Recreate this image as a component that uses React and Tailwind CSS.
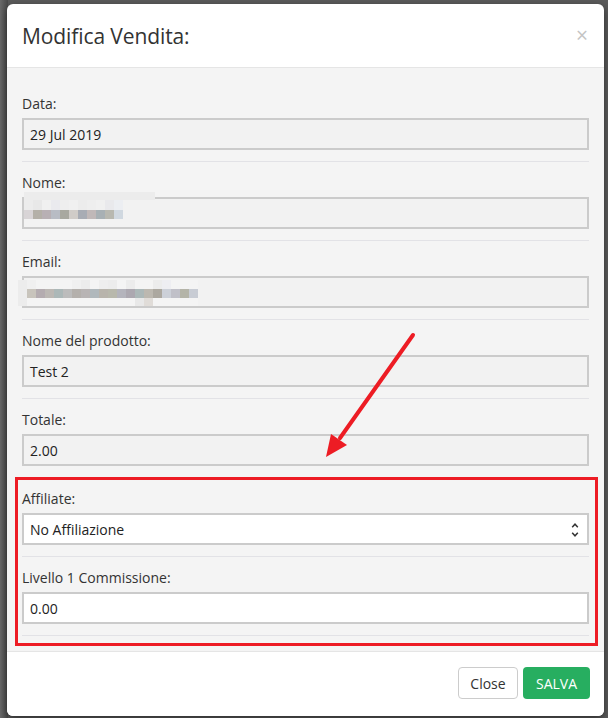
import React from "react";

const nomeCells = ["#d8d4d6","#b4b0a8","#b8b0b4","#b8bcc4","#a8a8a0","#d0ccc8","#a8acb4","#c0b8b8","#a8b0b4","#b8b8b0","#d0d8e0"];
const nomeMid = ["#ececec","#e8e8e8","#f0f0f0","#eaeaee","#eeeeee","#f0f0f0","#ececec","#eeeeee","#f0f0f0","#e9e9ec","#eceef2"];
const emailTop = ["#ececec","#f0f0f0","#f4f4f4","#f4f4f4","#f4f4f4","#f4f4f4","#f0f0f0","#ececec","#f4f4f4","#eeeeee","#ececec","#f4f4f4","#ececec","#f4f4f4","#f4f4f4","#ececec","#eeeef2","#f4f4f4","#f4f4f4","#f4f4f4"];
const emailCells = ["#ececec","#c8c4bc","#b4acb0","#bcb8b4","#acb8b8","#bcbcbc","#b4b0ac","#b8b4b4","#b0b8bc","#b8b4ac","#b8b8ac","#b4b4bc","#aca8b0","#acb8b8","#bcb8b0","#aca8a0","#ccd0d8","#c0c0c8","#b4b4a8","#c8ccd4"];
const emailBot = ["#ececec","#f4f4f4","#f4f4f4","#f4f4f4","#f4f4f4","#f4f4f4","#f4f4f4","#f4f4f4","#f4f4f4","#f4f4f4","#f4f4f4","#f4f4f4","#f4f4f4","#e8e8e8","#e0dcd8","#f4f4f4","#f4f4f4","#f4f4f4","#f4f4f4","#f4f4f4"];

function Group({ label, value, first, white, select, children }) {
  return (
    <div className={"relative pt-[10px] pb-[11px] " + (first ? "" : "border-t border-[#e2e2e6]")}>
      <div className="h-[20px] leading-[20px] text-[14px] text-[#333] mb-[5px] translate-y-[1px]">{label}</div>
      <div className={"relative h-[32px] border-2 border-[#cbcbcb] flex items-center px-[6px] text-[14px] text-[#222] " + (white ? "bg-white" : "bg-[#f2f2f2]")}>
        {value}
        {select && (
          <svg className="absolute right-[8px] top-[7px]" width="8" height="16" viewBox="0 0 8 16">
            <path d="M1.2 5.2 L4 2.2 L6.8 5.2" fill="none" stroke="#333" strokeWidth="1.5" />
            <path d="M1.2 10.8 L4 13.8 L6.8 10.8" fill="none" stroke="#333" strokeWidth="1.5" />
          </svg>
        )}
      </div>
      {children}
    </div>
  );
}

export default function App() {
  return (
    <div className="relative w-[608px] h-[718px] overflow-hidden bg-[#5b5b5b]" style={{ fontFamily: '"Open Sans", "Noto Sans", sans-serif' }}>
      <div className="absolute left-0 top-0 w-[8px] h-full bg-gradient-to-r from-[#6a6a6a] to-[#4a4a4a]" />
      <div className="relative ml-[7px] mt-[4px] w-[597px] h-[712px] bg-white rounded-[6px] shadow-[0_3px_9px_rgba(0,0,0,0.5)] flex flex-col overflow-hidden">
        <div className="h-[64px] border-b border-[#e5e5e5] flex items-center justify-between px-[15px]">
          <div className="text-[21px] text-[#333] leading-none tracking-[-0.1px] translate-y-[1px]">Modifica Vendita:</div>
          <div className="text-[21px] text-[#c4c4c4] leading-none pr-[1px]">×</div>
        </div>
        <div className="bg-[#f4f4f4] px-[15px] pt-[15px] pb-[15px]">
          <Group first label="Data:" value="29 Jul 2019" />
          <Group label="Nome:" value="">
            <svg className="absolute left-[2px] top-[30px]" width="132" height="28">
              <rect x="0" y="0" width="131" height="8" fill="#ececec" />
              {nomeMid.map((c, i) => <rect key={"m" + i} x={i * 9} y={8} width={9} height={10} fill={c} />)}
              {nomeCells.map((c, i) => <rect key={i} x={i * 9} y={18} width={9} height={9} fill={c} />)}
            </svg>
          </Group>
          <Group label="Email:" value="">
            <svg className="absolute left-[-4px] top-[39px]" width="184" height="28">
              {emailTop.map((c, i) => <rect key={"t" + i} x={i * 9} y={0} width={9} height={9} fill={c} />)}
              {emailCells.map((c, i) => <rect key={i} x={i * 9} y={9} width={9} height={9} fill={c} />)}
              {emailBot.map((c, i) => <rect key={"b" + i} x={i * 9} y={18} width={9} height={8} fill={c} />)}
            </svg>
          </Group>
          <Group label="Nome del prodotto:" value="Test 2" />
          <Group label="Totale:" value="2.00" />
          <Group label="Affiliate:" value="No Affiliazione" white select />
          <div className="border-b border-[#e2e2e6]">
            <Group label="Livello 1 Commissione:" value="0.00" white />
          </div>
        </div>
        <div className="flex-1 bg-white border-t border-[#e5e5e5] flex justify-end items-start gap-[5px] pt-[15px] px-[14px]">
          <div className="h-[32px] w-[60px] border border-[#ccc] rounded-[4px] bg-white flex items-center justify-center text-[14px] text-[#333]">Close</div>
          <div className="h-[32px] w-[67px] rounded-[4px] bg-[#27ae60] flex items-center justify-center text-[14px] text-white">SALVA</div>
        </div>
      </div>
      <div className="absolute left-[15px] top-[477px] w-[583px] h-[169px] border-[3px] border-[#ed1c24]" />
      <svg className="absolute left-0 top-0" width="608" height="718">
        <line x1="413" y1="335" x2="340" y2="438" stroke="#ed1c24" strokeWidth="4" strokeLinecap="round" />
        <polygon points="326,457 331,434 347,445" fill="#ed1c24" />
      </svg>
    </div>
  );
}
